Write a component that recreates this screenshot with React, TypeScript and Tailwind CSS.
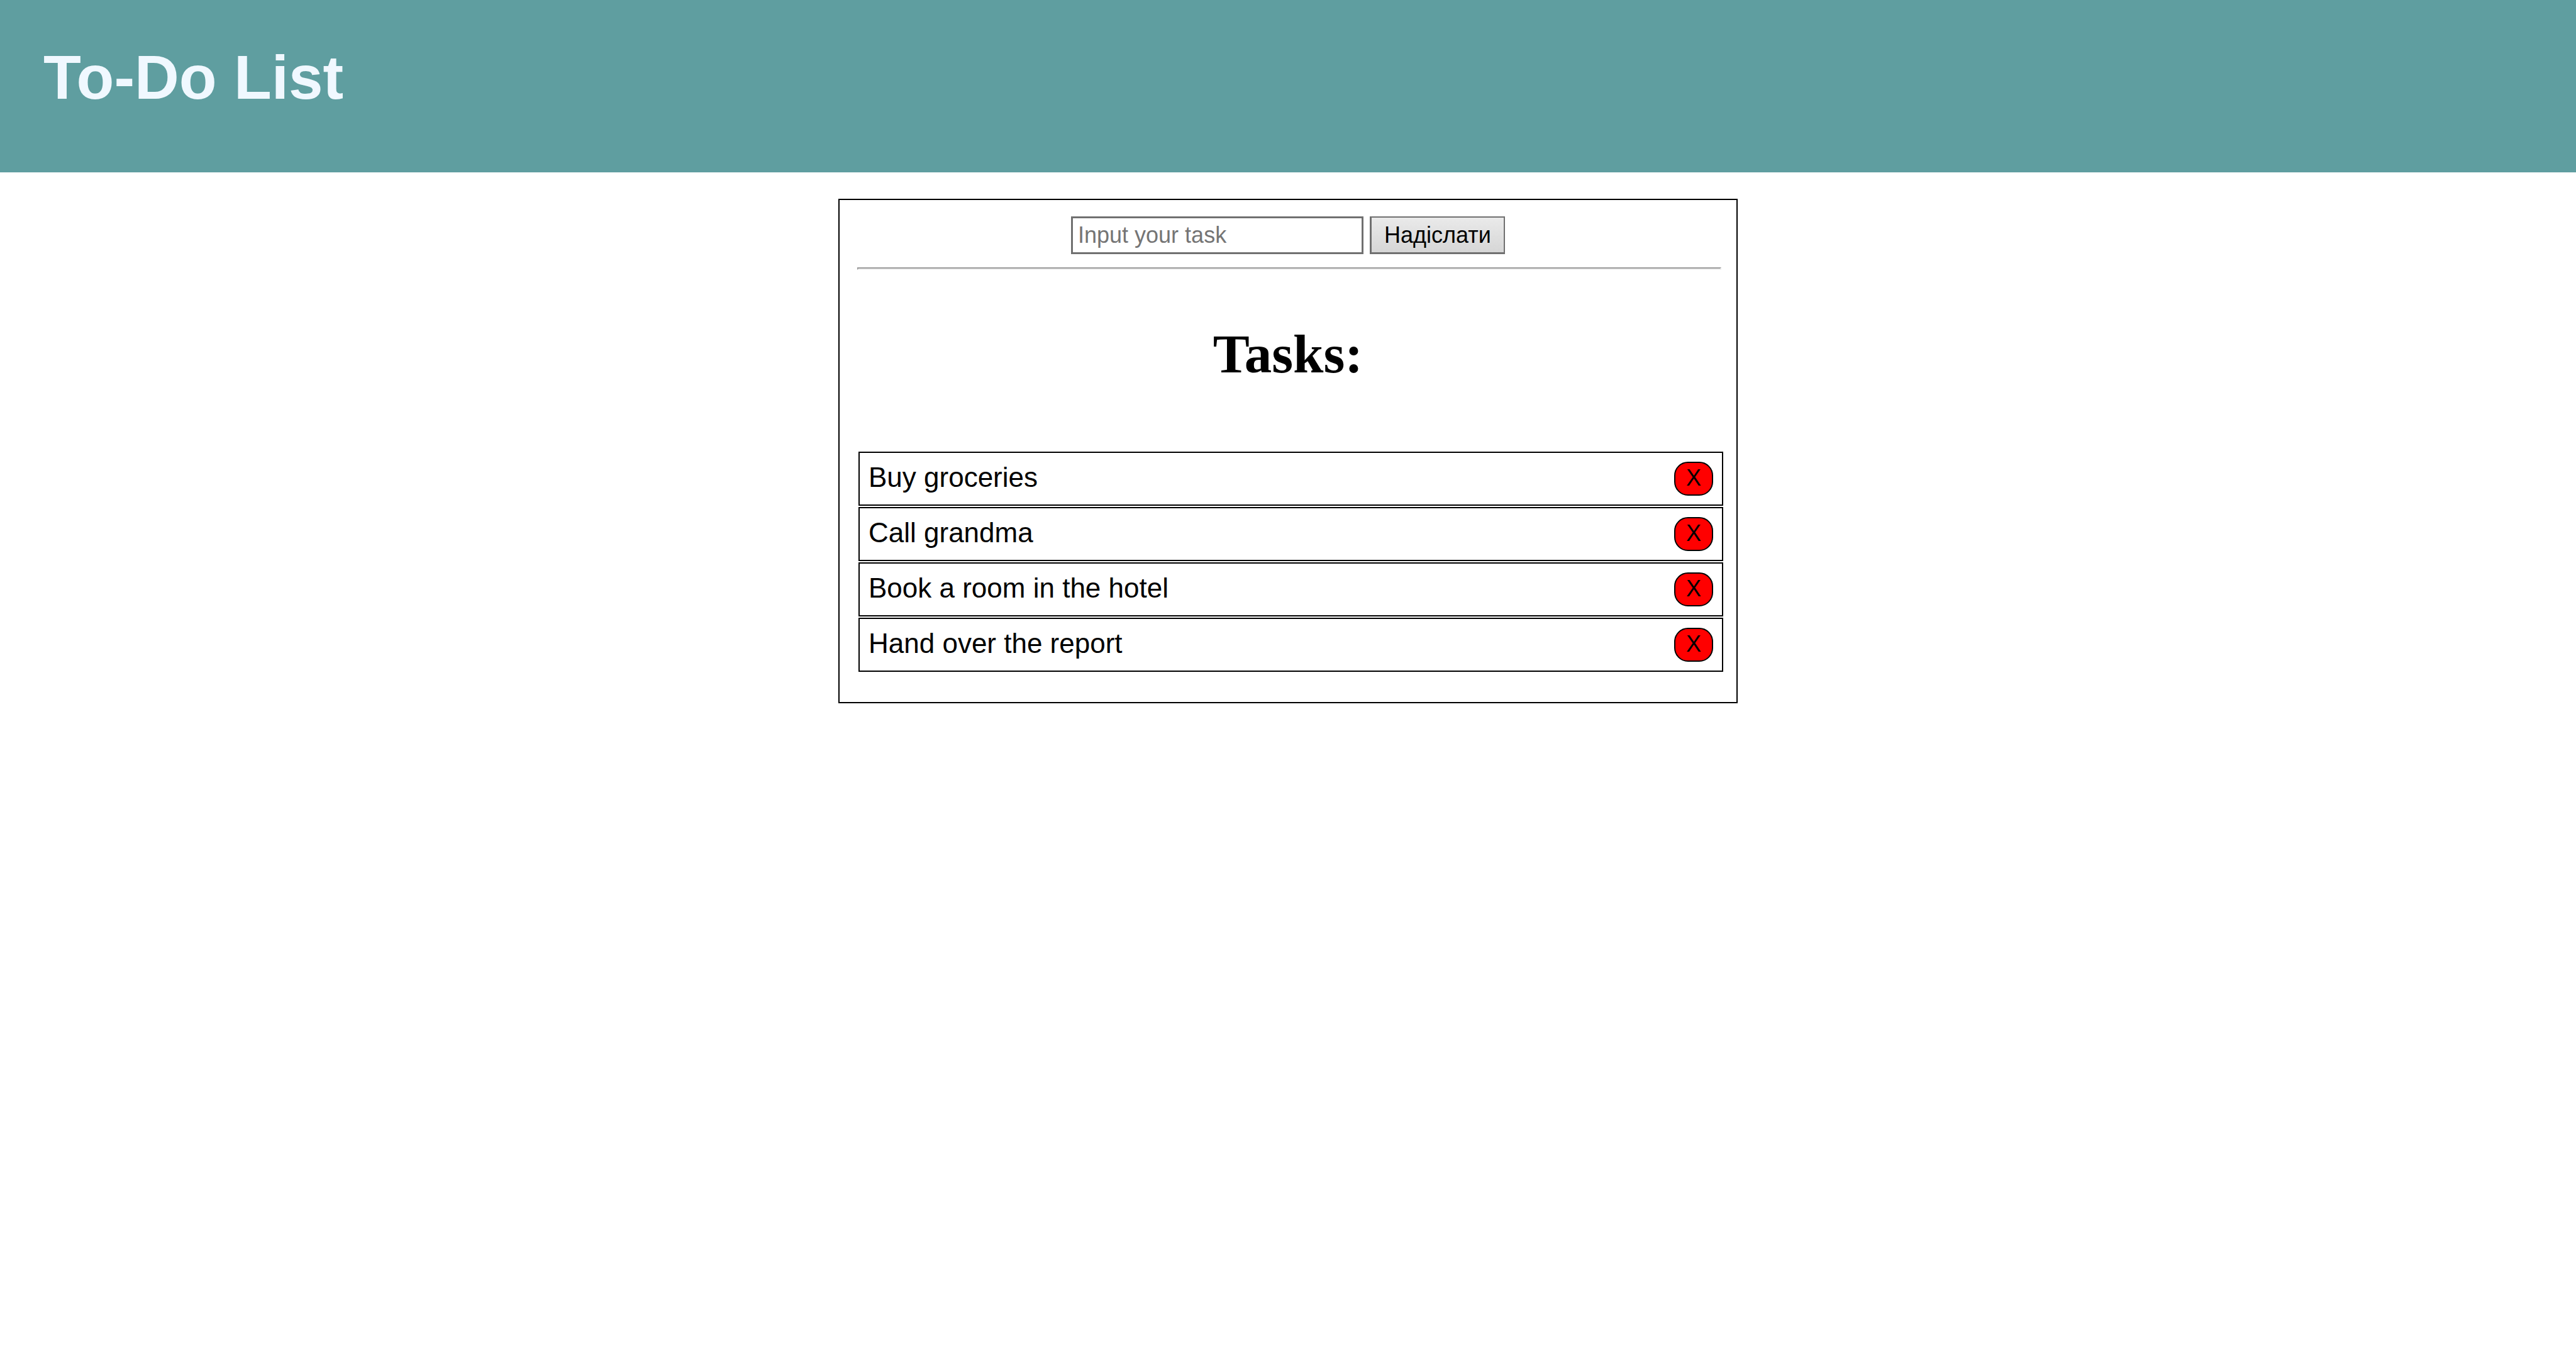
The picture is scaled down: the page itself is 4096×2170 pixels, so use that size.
import { useState } from "react";
import type { FormEvent } from "react";

type Task = { id: number; title: string };

const initialTasks: Task[] = [
  { id: 1, title: "Buy groceries" },
  { id: 2, title: "Call grandma" },
  { id: 3, title: "Book a room in the hotel" },
  { id: 4, title: "Hand over the report" },
];

function Header() {
  return (
    <header className="bg-[#5f9ea0] px-[69px] pt-[66px] pb-[94px]">
      <h1 className="text-[98px] leading-[114px] font-bold text-[#f0f8ff]">To-Do List</h1>
    </header>
  );
}

function TaskForm({ onAdd }: { onAdd: (title: string) => void }) {
  const [value, setValue] = useState("");

  const submit = (event: FormEvent) => {
    event.preventDefault();
    if (!value.trim()) return;
    onAdd(value.trim());
    setValue("");
  };

  return (
    <form onSubmit={submit} className="flex justify-center gap-[10px] pr-1">
      <input
        type="text"
        aria-label="Input your task"
        placeholder="Input your task"
        value={value}
        onChange={(event) => setValue(event.target.value)}
        className="h-[60px] w-[465px] border-[3px] border-[#707070] bg-white px-2 text-[36px] text-black placeholder:text-[#757575]"
      />
      <button
        type="submit"
        className="h-[60px] w-[215px] border-[3px] border-t-2 border-r-2 border-[#707070] bg-linear-to-b from-[#eaeaea] to-[#d6d6d6] text-[36px] leading-[42px] text-black"
      >
        Надіслати
      </button>
    </form>
  );
}

function TaskRow({ task, onRemove }: { task: Task; onRemove: (id: number) => void }) {
  return (
    <li className="flex items-start justify-between border-2 border-black p-[14px]">
      <span className="text-[44px] leading-[50px]">{task.title}</span>
      <button
        type="button"
        aria-label={`X: ${task.title}`}
        onClick={() => onRemove(task.id)}
        className="h-[54px] w-[62px] rounded-[22px] border-2 border-black bg-[#ff0000] pb-[2px] text-[36px] leading-[42px] text-black"
      >
        X
      </button>
    </li>
  );
}

export default function App() {
  const [tasks, setTasks] = useState<Task[]>(initialTasks);

  const add = (title: string) => setTasks((list) => [...list, { id: Date.now(), title }]);
  const remove = (id: number) => setTasks((list) => list.filter((task) => task.id !== id));

  return (
    <div className="min-h-screen bg-white font-['Liberation_Sans',Arial,sans-serif] text-black">
      <Header />
      <main className="mx-auto mt-[42px] max-w-[1430px] border-2 border-black pt-[26px] pr-6 pb-12 pl-7">
        <TaskForm onAdd={add} />
        <hr className="mt-[21px] border-2 border-t-[#9a9a9a] border-r-[#eeeeee] border-b-[#eeeeee] border-l-[#9a9a9a]" />
        <h2 className="mt-[84px] pr-1 text-center font-['Liberation_Serif','Times_New_Roman',serif] text-[87px] leading-[100px] font-bold">
          Tasks:
        </h2>
        <ul className="mt-[105px] -mr-[3px] ml-[2px] flex flex-col gap-[2px]">
          {tasks.map((task) => (
            <TaskRow key={task.id} task={task} onRemove={remove} />
          ))}
        </ul>
      </main>
    </div>
  );
}
